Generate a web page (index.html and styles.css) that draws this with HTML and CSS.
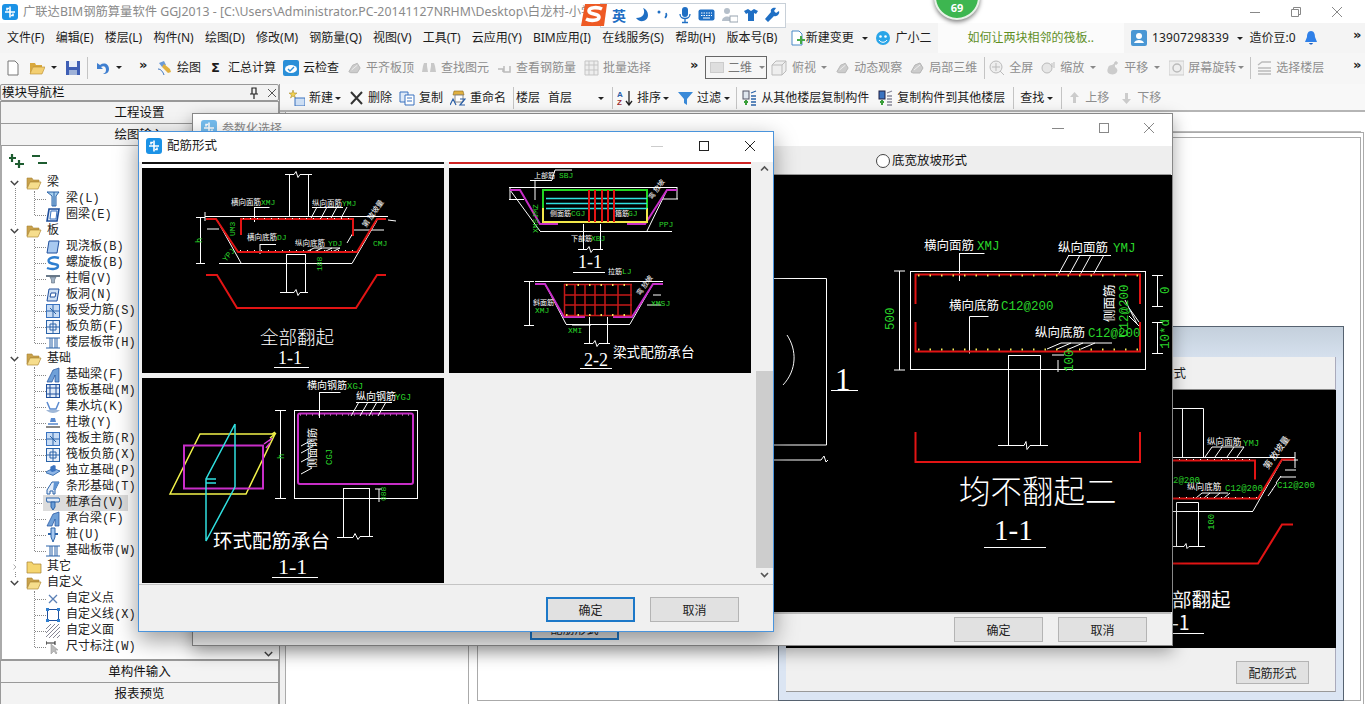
FILE: index.html
```html
<!DOCTYPE html>
<html lang="zh-CN">
<head>
<meta charset="utf-8">
<title>广联达BIM钢筋算量软件 GGJ2013</title>
<link rel="stylesheet" href="styles.css">
</head>
<body>
<svg class="defs" width="0" height="0">
  <symbol id="app" viewBox="0 0 16 16"><rect width="16" height="16" rx="3" fill="#1b92e6"/><path d="M8 2.500v11M3 8h10M5 6.500v-2h2M11 9.500v2H9" fill="none" stroke="#fff" stroke-width="1.600"/></symbol>
  <symbol id="fo" viewBox="0 0 16 14"><path d="M1 2h5l1 2h6v2H4L1 12z" fill="#c9a24b" stroke="#a88332" stroke-width=".6"/><path d="M4 6h11l-3 7H1z" fill="#f6dd8c" stroke="#b08a38" stroke-width=".7"/></symbol>
  <symbol id="fc" viewBox="0 0 16 14"><path d="M1 2h5l1 2h8v9H1z" fill="#f5d56f" stroke="#a88332" stroke-width=".7"/></symbol>
  <symbol id="down" viewBox="0 0 9 6"><path d="M.8 1 4.500 4.700 8.200 1" fill="none" stroke="#444" stroke-width="1.500"/></symbol>
  <symbol id="right" viewBox="0 0 9 9"><path d="M3 .8 6.700 4.500 3 8.200" fill="none" stroke="#aaa" stroke-width="1.500"/></symbol>
  <symbol id="i-beam" viewBox="0 0 14 16"><path d="M1 1h12l-3 4v10H6V5z" fill="#a9d0ee" stroke="#2a63a8"/><path d="M8 1v14" stroke="#2a63a8"/></symbol>
  <symbol id="i-ring" viewBox="0 0 14 16"><path d="M3 2h10l-2 12H1z" fill="#dfeaf8" stroke="#1f4f9c" stroke-width="1.600"/><path d="M5 4h6l-1 8H4z" fill="#fff" stroke="#3a73c0"/></symbol>
  <symbol id="i-slab" viewBox="0 0 14 16"><path d="M3 2h10l-2 12H1z" fill="#a8c9f0" stroke="#1f4f9c"/></symbol>
  <symbol id="i-spiral" viewBox="0 0 14 16"><path d="M13 3C6 1 1 4 3 7s9 1 9 4-6 4-11 2" fill="none" stroke="#2f7fd0" stroke-width="2.400"/></symbol>
  <symbol id="i-cap" viewBox="0 0 14 16"><path d="M0 4h14v2H0z" fill="#6a7a8a"/><path d="M4 6h6L8.500 9v3h-3V9z" fill="#9fb1c4" stroke="#5a6a7a" stroke-width=".6"/></symbol>
  <symbol id="i-hole" viewBox="0 0 14 16"><path d="M3 2h10l-2 12H1z" fill="#cfe0f5" stroke="#1f4f9c"/><path d="M5 6h5l-1 4H4z" fill="#fff" stroke="#1f4f9c"/></symbol>
  <symbol id="i-r1" viewBox="0 0 14 16"><rect x=".5" y="1.500" width="13" height="13" fill="#c7dcf5" stroke="#3a73c0"/><path d="M7 2v12M1 8h12M4 5l6 6" stroke="#2a63a8"/></symbol>
  <symbol id="i-r2" viewBox="0 0 14 16"><rect x=".5" y="1.500" width="13" height="13" fill="#e8f0fb" stroke="#2a63a8"/><path d="M7 2v12M1 8h12M4 5h6v6H4z" fill="none" stroke="#2a63a8"/></symbol>
  <symbol id="i-band" viewBox="0 0 14 16"><path d="M0 3h14M0 13h14M4 3v10M6 3v10M9 3v10M11 3v10" stroke="#2a63a8"/></symbol>
  <symbol id="i-fb" viewBox="0 0 14 16"><path d="M1 15 7 3l6-2v14H9V8l-3 7z" fill="#6fa0d8" stroke="#1f4f9c" stroke-width=".7"/></symbol>
  <symbol id="i-raft" viewBox="0 0 14 16"><rect x=".5" y="1.500" width="13" height="13" fill="#dfeaf8" stroke="#1f4f9c"/><path d="M4 2v12M10 2v12M1 5h12M1 11h12" stroke="#1f4f9c"/></symbol>
  <symbol id="i-pit" viewBox="0 0 14 16"><path d="M1 3l3 7h6l3-7" fill="none" stroke="#5a8ad0" stroke-width="1.500"/><path d="M0 11c4 4 10 4 14 0" fill="#a0b8d8"/></symbol>
  <symbol id="i-pier" viewBox="0 0 14 16"><path d="M5 3h4l1 4H4z" fill="#5a8ad0"/><path d="M2 8h10v2H2z" fill="#7fa4d8"/><path d="M0 11h14v2H0z" fill="#888"/></symbol>
  <symbol id="i-iso" viewBox="0 0 16 16"><path d="M0 9l8-4 8 3-8 5-8-3z" fill="#8fb6e6" stroke="#2a63a8"/><path d="M5 3l4-2 2 1v6L7 9 5 8z" fill="#3a73c0"/></symbol>
  <symbol id="i-str" viewBox="0 0 14 16"><path d="M1 15V11l5-8h7l-4 8v4H7v-3H4v3z" fill="#e2ecf9" stroke="#2a63a8"/><path d="M8 3h5l-4 8H7z" fill="#5f93d2"/></symbol>
  <symbol id="i-pc" viewBox="0 0 14 16"><path d="M0 3h13l1 2-1 2H1z" fill="#dfeaf8" stroke="#2a63a8"/><path d="M5 7h4v5l-2 3-2-3z" fill="#6fa0d8" stroke="#2a63a8"/></symbol>
  <symbol id="i-pile" viewBox="0 0 14 16"><path d="M2 7h10" stroke="#2a63a8" stroke-width="2"/><path d="M5 1h4v9l-2 5-2-5z" fill="#a8c9f0" stroke="#2a63a8"/></symbol>
  <symbol id="i-x" viewBox="0 0 14 16"><path d="M3 4l8 8M11 4l-8 8" stroke="#5a7fb5" stroke-width="1.300"/></symbol>
  <symbol id="i-ln" viewBox="0 0 14 16"><rect x="1.500" y="2.500" width="11" height="11" fill="none" stroke="#1f4f9c"/><path d="M0 1h3v3H0zM11 1h3v3h-3zM0 12h3v3H0zM11 12h3v3h-3z" fill="#2f7fd0"/></symbol>
  <symbol id="i-hat" viewBox="0 0 14 16"><path d="M0 6l5-5M0 10l9-9M0 14l13-13M3 15l11-11M7 15l7-7M11 15l3-3" stroke="#778" stroke-width=".9"/></symbol>
  <symbol id="i-dim" viewBox="0 0 14 16"><path d="M0 2v4M0 4h9M9 2v4" stroke="#222"/><path d="M5 5v10l3-3 2 3 1-1-2-3h3z" fill="#bbb" stroke="#999" stroke-width=".6"/></symbol>
  <symbol id="gr" viewBox="0 0 16 16"><path d="M2 12l4-7 5-2 3 5-3 5H4z" fill="#ccc" stroke="#b5b5b5"/><path d="M5 10l6-5" stroke="#eee"/></symbol>
</svg>

<header class="title">
  <svg class="ic16"><use href="#app"/></svg>
  <span class="title-t">广联达BIM钢筋算量软件 GGJ2013 - [C:\Users\Administrator.PC-20141127NRHM\Desktop\白龙村-小学教学楼结构工程施工图纸-2.GGJ12]</span>
  <div class="win">
    <svg width="12" height="12"><path d="M1 6.500h10" stroke="#888"/></svg>
    <svg width="12" height="12"><path d="M1.500 3.500h7v7h-7zM3.500 3V1.500h7v7H9" fill="none" stroke="#888"/></svg>
    <svg width="12" height="12"><path d="M1 1l10 10M11 1 1 11" stroke="#888"/></svg>
  </div>
</header>

<nav class="menu">
  <span>文件(F)</span><span>编辑(E)</span><span>楼层(L)</span><span>构件(N)</span><span>绘图(D)</span><span>修改(M)</span><span>钢筋量(Q)</span><span>视图(V)</span><span>工具(T)</span><span>云应用(Y)</span><span>BIM应用(I)</span><span>在线服务(S)</span><span>帮助(H)</span><span>版本号(B)</span>
  <svg class="ic16 m-ic" viewBox="0 0 16 16"><path d="M3 1h7l3 3v11H3z" fill="#fff" stroke="#4a8ac8"/><path d="M8 9h3V6h2v3h3v2h-3v3h-2v-3H8z" fill="#45a845"/></svg>
  <span class="nm">新建变更</span><i class="caret c1"></i>
  <svg class="ic16 m-ic2" viewBox="0 0 16 16"><circle cx="8" cy="8" r="7" fill="#2aa5e8"/><circle cx="5.500" cy="6.500" r="1.300" fill="#fff"/><circle cx="10.500" cy="6.500" r="1.300" fill="#fff"/><path d="M4 10c2 3 6 3 8 0" stroke="#fff" fill="none"/></svg>
  <span class="nm">广小二</span>
  <span class="tip">如何让两块相邻的筏板..</span>
  <svg class="ic16 m-user" viewBox="0 0 16 16"><rect width="16" height="16" rx="2" fill="#4a97d4"/><circle cx="8" cy="6" r="3" fill="#fff"/><path d="M3 13c1-4 9-4 10 0z" fill="#fff"/></svg>
  <span class="nm phone">13907298339</span><i class="caret c2"></i>
  <span class="bean">造价豆:0</span>
  <svg class="ic16 bell" viewBox="0 0 16 16"><path d="M8 1c-3 0-4 3-4 6l-2 5h12l-2-5c0-3-1-6-4-6z" fill="#2f80e8"/><path d="M6 13c1 2 3 2 4 0z" fill="#1f60c0"/></svg>
  <b class="more">»</b>
</nav>

<div class="tb1">
  <svg class="w12" viewBox="0 0 12 16"><path d="M1 1h7l3 3v11H1z" fill="#fff" stroke="#777"/></svg>
  <svg class="w16 m10" viewBox="0 0 16 16"><path d="M1 3h5l1 2h6v2H4l-3 7z" fill="#d9a93e"/><path d="M4 7h12l-3 7H1z" fill="#f3cf72" stroke="#b88a2a" stroke-width=".6"/></svg>
  <i class="caret m6"></i>
  <svg class="w14 m9" viewBox="0 0 14 16"><rect y="1" width="14" height="14" fill="#3f5fb5"/><rect x="3" y="1" width="8" height="6" fill="#e8eef8"/><rect x="3" y="10" width="8" height="5" fill="#9fb2d8"/></svg>
  <i class="sep m7"></i>
  <svg class="w14 m7" viewBox="0 0 14 16"><path d="M2 3v6h6L6 7c3-2 5 0 5 3 0 2-1 3-3 4 4 0 6-2 6-5 0-5-5-7-9-4z" fill="#3f7fd0"/></svg>
  <i class="caret m7"></i>
  <b class="more m17">»</b>
  <div class="t m10"><svg class="w16" viewBox="0 0 16 16"><path d="M2 3l5-2 2 4-4 2z" fill="#6a9ad8"/><path d="M5 7l6 6 3-1-1-3-6-5z" fill="#e0b040"/><path d="M1 9c3 0 5 3 6 6" stroke="#3a73c0" fill="none"/></svg><span>绘图</span></div>
  <div class="t m10"><b class="sig">Σ</b><span class="sigt">汇总计算</span></div>
  <div class="t m7"><svg class="w16" viewBox="0 0 16 16"><rect width="16" height="16" rx="2" fill="#2a8fd8"/><ellipse cx="8" cy="9" rx="6" ry="4" fill="#fff"/><path d="M5 9l2 2 4-4" stroke="#2a8fd8" fill="none" stroke-width="1.400"/></svg><span>云检查</span></div>
  <div class="t dim m8"><svg class="w15"><use href="#gr"/></svg><span>平齐板顶</span></div>
  <div class="t dim m7"><svg class="w16" viewBox="0 0 16 16"><path d="M3 3h3v3l1 6H1l1-6zM10 3h3l1 3 1 6H9l1-6z" fill="#c8c8c8"/></svg><span>查找图元</span></div>
  <div class="t dim m8"><svg class="w15" viewBox="0 0 15 16"><path d="M1 9h5v3M7 6v6h6V6" fill="none" stroke="#bbb" stroke-width="1.500"/></svg><span>查看钢筋量</span></div>
  <div class="t dim m8"><svg class="w15" viewBox="0 0 15 16"><path d="M1 1h13v14H1zM1 5h13M1 10h13M5 1v14M10 1v14" fill="#eee" stroke="#c5c5c5"/></svg><span>批量选择</span></div>
  <b class="more m39">»</b>
  <div class="combo m7"><i class="swatch"></i><span>二维</span><i class="caret cg"></i></div>
  <div class="t dim m4"><svg class="w17" viewBox="0 0 17 16"><path d="M1 5l4-4h10v10l-4 4H1zM1 5h10v10M11 5l4-4" fill="#eee" stroke="#bbb"/></svg><span>俯视</span></div><i class="caret cg m5"></i>
  <div class="t dim m8"><svg class="w15"><use href="#gr"/></svg><span>动态观察</span></div>
  <div class="t dim m7"><svg class="w16"><use href="#gr"/></svg><span>局部三维</span></div>
  <i class="sep m7"></i>
  <div class="t dim m4"><svg class="w16" viewBox="0 0 16 16"><circle cx="7" cy="7" r="6" fill="#eee" stroke="#bbb"/><path d="M7 3v8M3 7h8M11 11l4 4" stroke="#bbb"/></svg><span>全屏</span></div>
  <div class="t dim m8"><svg class="w15" viewBox="0 0 15 16"><circle cx="6" cy="8" r="5" fill="#e6e6e6" stroke="#bbb"/><path d="M11 3v4M13 2v6" stroke="#bbb"/></svg><span>缩放</span></div><i class="caret cg m6"></i>
  <div class="t dim m9"><svg class="w15" viewBox="0 0 15 16"><path d="M3 8c0-2 2-3 4-3l3-2v4c2 1 3 3 2 5s-4 3-7 2-3-4-2-6z" fill="#ccc"/><path d="M11 1v4M9 3h4" stroke="#bbb"/></svg><span>平移</span></div><i class="caret cg m6"></i>
  <div class="t dim m9"><svg class="w15" viewBox="0 0 15 16"><rect y="1" width="15" height="14" fill="#eee" stroke="#ccc"/><circle cx="8" cy="8" r="4" fill="none" stroke="#bbb" stroke-width="1.500"/></svg><span>屏幕旋转</span></div><i class="caret cg m2"></i>
  <i class="sep m6"></i>
  <div class="t dim m6"><svg class="w15" viewBox="0 0 15 16"><path d="M1 5l4-3h9M1 8h13M1 11h13M1 14h13" fill="none" stroke="#bbb" stroke-width="1.400"/></svg><span>选择楼层</span></div>
  <b class="more end">»</b>
</div>

<div class="work">
  <aside class="nav">
    <div class="nav-h"><span>模块导航栏</span>
      <svg class="pin" width="10" height="12"><path d="M3 1h4v6H3zM1 7h8M5 7v5" fill="none" stroke="#222" stroke-width="1.200"/></svg>
      <svg class="navx" width="10" height="10"><path d="M1 1l8 8M9 1 1 9" stroke="#555"/></svg>
    </div>
    <div class="nav-b">工程设置</div>
    <div class="nav-b">绘图输入</div>
    <div class="tools">
      <svg width="16" height="16"><path d="M3 1v8M0 5h7M10 7v8M6 11h9" stroke="#1d5c30" stroke-width="2.200"/></svg>
      <svg width="16" height="16"><path d="M0 3h8M6 10h9" stroke="#1d5c30" stroke-width="2.200"/></svg>
    </div>
    <div class="tree">
      <div class="rt"><svg class="chev"><use href="#down"/></svg><svg class="fd"><use href="#fo"/></svg><span>梁</span></div>
      <div class="kids">
        <div class="ch"><i></i><svg><use href="#i-beam"/></svg><span>梁(L)</span></div>
        <div class="ch"><i></i><svg><use href="#i-ring"/></svg><span>圈梁(E)</span></div>
      </div>
      <div class="rt"><svg class="chev"><use href="#down"/></svg><svg class="fd"><use href="#fo"/></svg><span>板</span></div>
      <div class="kids">
        <div class="ch"><i></i><svg><use href="#i-slab"/></svg><span>现浇板(B)</span></div>
        <div class="ch"><i></i><svg><use href="#i-spiral"/></svg><span>螺旋板(B)</span></div>
        <div class="ch"><i></i><svg><use href="#i-cap"/></svg><span>柱帽(V)</span></div>
        <div class="ch"><i></i><svg><use href="#i-hole"/></svg><span>板洞(N)</span></div>
        <div class="ch"><i></i><svg><use href="#i-r1"/></svg><span>板受力筋(S)</span></div>
        <div class="ch"><i></i><svg><use href="#i-r2"/></svg><span>板负筋(F)</span></div>
        <div class="ch"><i></i><svg><use href="#i-band"/></svg><span>楼层板带(H)</span></div>
      </div>
      <div class="rt"><svg class="chev"><use href="#down"/></svg><svg class="fd"><use href="#fo"/></svg><span>基础</span></div>
      <div class="kids">
        <div class="ch"><i></i><svg><use href="#i-fb"/></svg><span>基础梁(F)</span></div>
        <div class="ch"><i></i><svg><use href="#i-raft"/></svg><span>筏板基础(M)</span></div>
        <div class="ch"><i></i><svg><use href="#i-pit"/></svg><span>集水坑(K)</span></div>
        <div class="ch"><i></i><svg><use href="#i-pier"/></svg><span>柱墩(Y)</span></div>
        <div class="ch"><i></i><svg><use href="#i-r1"/></svg><span>筏板主筋(R)</span></div>
        <div class="ch"><i></i><svg><use href="#i-r2"/></svg><span>筏板负筋(X)</span></div>
        <div class="ch"><i></i><svg><use href="#i-iso"/></svg><span>独立基础(P)</span></div>
        <div class="ch"><i></i><svg><use href="#i-str"/></svg><span>条形基础(T)</span></div>
        <div class="ch on"><i></i><svg><use href="#i-pc"/></svg><span>桩承台(V)</span></div>
        <div class="ch"><i></i><svg><use href="#i-fb"/></svg><span>承台梁(F)</span></div>
        <div class="ch"><i></i><svg><use href="#i-pile"/></svg><span>桩(U)</span></div>
        <div class="ch"><i></i><svg><use href="#i-band"/></svg><span>基础板带(W)</span></div>
      </div>
      <div class="rt"><svg class="chev"><use href="#right"/></svg><svg class="fd"><use href="#fc"/></svg><span>其它</span></div>
      <div class="rt"><svg class="chev"><use href="#down"/></svg><svg class="fd"><use href="#fo"/></svg><span>自定义</span></div>
      <div class="kids">
        <div class="ch"><i></i><svg><use href="#i-x"/></svg><span>自定义点</span></div>
        <div class="ch"><i></i><svg><use href="#i-ln"/></svg><span>自定义线(X)</span><em class="edit"></em></div>
        <div class="ch"><i></i><svg><use href="#i-hat"/></svg><span>自定义面</span></div>
        <div class="ch"><i></i><svg><use href="#i-dim"/></svg><span>尺寸标注(W)</span></div>
      </div>
      <svg class="tree-down" width="9" height="6"><use href="#down"/></svg>
    </div>
    <div class="nav-b">单构件输入</div>
    <div class="nav-b">报表预览</div>
  </aside>
  <main class="pane">
    <div class="tb2">
      <div class="t"><svg class="w16" viewBox="0 0 16 16"><path d="M4 0l1 3h3L5.500 5l1 3L4 6 1.500 8l1-3L0 3h3z" fill="#f0d050" stroke="#a08020" stroke-width=".5"/><rect x="6" y="8" width="10" height="8" fill="#cfe0f5" stroke="#3a73c0"/></svg><span>新建</span></div><i class="caret m2"></i>
      <div class="t m8"><svg class="w15" viewBox="0 0 15 16"><path d="M2 2l11 12M13 2 2 14" stroke="#333" stroke-width="2"/></svg><span>删除</span></div>
      <div class="t m7"><svg class="w16" viewBox="0 0 16 16"><path d="M1 2h8v10H1z" fill="#dfeaf8" stroke="#3a73c0"/><path d="M6 5h9v10H6z" fill="#fff" stroke="#3a73c0"/><path d="M8 8h5M8 11h5" stroke="#3a73c0"/></svg><span>复制</span></div>
      <div class="t m7"><svg class="w16" viewBox="0 0 16 16"><path d="M4 1h9l1 4H3z" fill="#e0b040" stroke="#8a6a20" stroke-width=".6"/><path d="M5 5h8v7H5z" fill="#fff" stroke="#888"/><path d="M0 15l3-6 3 6M10 9h5l-5 6h5" fill="none" stroke="#2a5fa8" stroke-width="1.200"/></svg><span>重命名</span></div>
      <i class="sep m7"></i><span class="m2">楼层</span><span class="m8">首层</span><i class="caret m26"></i>
      <i class="sep m8"></i>
      <div class="t m4"><svg class="w16" viewBox="0 0 16 16"><path d="M12 1v13M9 11l3 4 3-4" fill="none" stroke="#222" stroke-width="1.300"/><text x="0" y="7" class="az1">A</text><text x="0" y="15" class="az2">Z</text></svg><span>排序</span></div><i class="caret m2"></i>
      <div class="t m9"><svg class="w15" viewBox="0 0 15 16"><path d="M0 2h15L9 9v6L6 13V9z" fill="#3a8ad8"/></svg><span>过滤</span></div><i class="caret m3"></i>
      <i class="sep m6"></i>
      <div class="t m5"><svg class="w15" viewBox="0 0 15 16"><rect x="1" y="1" width="6" height="8" fill="#dfe6ee" stroke="#556"/><path d="M2 12h4M4 10v5" stroke="#3aa03a" stroke-width="2"/><path d="M9 3l5-2M9 6h5M9 9h5M9 12h5M9 15h5" stroke="#2a63a8" stroke-width="1.300"/></svg><span>从其他楼层复制构件</span></div>
      <div class="t m9"><svg class="w15" viewBox="0 0 15 16"><rect x="1" y="1" width="6" height="8" fill="#3a73c0" stroke="#224"/><path d="M2 12h4M4 10v5" stroke="#3aa03a" stroke-width="2"/><path d="M9 3l5-2M9 6h5M9 9h5M9 12h5M9 15h5" stroke="#889" stroke-width="1.300"/></svg><span>复制构件到其他楼层</span></div>
      <i class="sep m8"></i><span class="m6">查找</span><i class="caret m3"></i><i class="sep m8"></i>
      <div class="t dim m6"><svg class="w13" viewBox="0 0 13 16"><path d="M6.500 2 11 7H8v6H5V7H2z" fill="#ccc"/></svg><span>上移</span></div>
      <div class="t dim m11"><svg class="w13" viewBox="0 0 13 16"><path d="M6.500 14 2 9h3V3h3v6h3z" fill="#ccc"/></svg><span>下移</span></div>
    </div>
    <div class="canvas-o"><div class="canvas-i"></div></div>
  </main>
</div>

<!-- window 3 : behind -->
<section class="d3">
  <div class="d3-in">
    <div class="d3-h">底宽放坡形式</div>
    <svg class="cad" width="550" height="258" viewBox="786 390 550 258">
      <path class="w" d="M1161.500 408.500h42M1182.500 408.500v49M1203.500 408.500v49M1172 457.500h123M1295 452v16M1283 460h15M1282 460l-29 51M1172 511.500h81M1176.500 502.500v44M1198.500 502.500h-22M1198.500 502.500v44M1170 546.500h14l2-3 1 5 2-2h16"/>
      <path class="w" d="M1205 457l7-10h32M1215 457l7-10M1227 457l7-10M1237 457l7-10M1196 498l6-5h26M1204 498l6-5M1214 498l6-5M1224 498l6-5M1276 483l5-7M1272 490l5-7M1268 496l5-7M1285 470h11M1280 477h16"/>
      <path class="r" d="M1172 460.500h83v19M1172 498.500h86l24-39h12"/>
      <path class="d" d="M1172 459.500h83M1172 497.500h86"/>
      <path class="r" d="M1172 563.500h86l24-39h11"/>
      <text class="tw s85" x="1207" y="445">纵向面筋</text><text class="tg s9" x="1243" y="446">YMJ</text>
      <text class="tw s85" x="1187" y="490">纵向底筋</text><text class="tg s9" x="1225" y="491">C12@200</text>
      <text class="tg s9" x="1277" y="488">C12@200</text><text class="tg s9" x="1173" y="483">2@200</text>
      <text class="tg s9" transform="rotate(-90 1214 512)" x="1196" y="512">100</text>
      <text class="tw s9" transform="rotate(-55 1268 470)" x="1268" y="470">第 放坡量</text>
      <text class="tw s20" x="1172" y="607">部翻起</text>
      <text class="tw s20" x="1172" y="630">-1</text>
      <path class="w" d="M1172 633.500h32"/>
    </svg>
    <div class="d3-f"><button class="btn b3">配筋形式</button></div>
  </div>
</section>

<!-- window 2 -->
<section class="d2">
  <div class="d2-t"><svg class="ic16 faded"><use href="#app"/></svg><span>参数化选择</span>
    <div class="d2-w">
      <svg width="14" height="12"><path d="M1 6.500h12" stroke="#888"/></svg>
      <svg width="12" height="12"><rect x="1.500" y="1.500" width="9" height="9" fill="none" stroke="#888"/></svg>
      <svg width="12" height="12"><path d="M1 1l10 10M11 1 1 11" stroke="#888"/></svg>
    </div>
  </div>
  <div class="d2-r"><i class="radio"></i><span>底宽放坡形式</span></div>
  <svg class="cad" width="978" height="437" viewBox="193 175 978 437">
    <path class="w" d="M770 278.500h55.500v166.500H770M786 335c10 15 10 35 -4 50M830 390.500h27M770 460h50l3-4 2 6 2-2"/>
    <text class="tw s32" x="834" y="390">1</text>
    <rect class="w" x="909.500" y="271.500" width="235" height="98"/>
    <path class="w" d="M898.500 271v99M893 271h11M893 370h11M958.500 253v28M958.500 253.500h25M968.500 316.500v37M968.500 316.500h19M1007.500 355v90M1039.500 355v90M1007.500 355.500h32M997 445.500h26l2-4 1 8 3-4h18M1156.500 275v32M1151 275.500h11M1151 306.500h11M1156.500 322v32M1151 322.500h11M1151 353.500h11M1057 360v12M1051 355h12"/>
    <path class="w" d="M1067 255.500h43M1057 275l11-20M1068 275l11-20M1079 275l11-20M1092 275l11-20M1046 349l14-6h51M1056 349l14-6M1068 349l14-6M1080 349l14-6M1128 308l10 14M1128 316l10 10M1124 300l12 24"/>
    <path class="r" d="M914.500 304v-29.500h224.500v29.500M914.500 322v29.500h224.500V322"/>
    <path class="r" d="M914.500 432v30h224.500v-30"/>
    <path class="dots" d="M917 275.500h220M917 349.500h220"/>
    <text class="tw s12" x="923" y="250">横向面筋</text><text class="tg s12m" x="976" y="250">XMJ</text>
    <text class="tw s12" x="1057" y="252">纵向面筋</text><text class="tg s12m" x="1112" y="252">YMJ</text>
    <text class="tw s12" x="948" y="310">横向底筋</text><text class="tg s12m" x="1000" y="310">C12@200</text>
    <text class="tw s12" x="1034" y="337">纵向底筋</text><text class="tg s12m" x="1087" y="337">C12@200</text>
    <text class="tw s12" transform="rotate(-90 1113 322)" x="1113" y="322">侧面筋</text>
    <text class="tg s12m" transform="rotate(-90 1127 337)" x="1127" y="337">C12@200</text>
    <text class="tg s12m" transform="rotate(-90 893 330)" x="893" y="330">500</text>
    <text class="tg s12m" transform="rotate(-90 1168 294)" x="1168" y="294">0</text>
    <text class="tg s12m" transform="rotate(-90 1168 349)" x="1168" y="349">10*d</text>
    <text class="tg s12m" transform="rotate(-90 1072 372)" x="1072" y="372">100</text>
    <text class="tw s31" x="958" y="503">均不翻起二</text>
    <text class="tw s28" x="993" y="540">1-1</text>
    <path class="w" d="M983 547.500h62"/>
  </svg>
  <div class="d2-f">
    <button class="btn on b-pat">配筋形式</button>
    <button class="btn">确定</button>
    <button class="btn">取消</button>
  </div>
</section>

<!-- window 1 : front -->
<section class="d1">
  <div class="d1-t"><svg class="ic16"><use href="#app"/></svg><span>配筋形式</span>
    <div class="d1-w">
      <svg width="14" height="12"><path d="M1 6.500h12" stroke="#ccc"/></svg>
      <svg width="12" height="12"><rect x="1.500" y="1.500" width="9" height="9" fill="none" stroke="#222"/></svg>
      <svg width="12" height="12"><path d="M1 1l10 10M11 1 1 11" stroke="#222"/></svg>
    </div>
  </div>
  <div class="d1-b">
    <div class="grid">
      <div class="cell">
        <svg class="cad" width="302" height="205" viewBox="142 168 302 205">
          <path class="w" d="M205 216.500h183M289.500 174v42M308.500 174v42M285 174.500h9l2-3 2 6 2-3h12M205 212v9M396 221l-8-1M219 263.500h133l25-43M217 220l24 43M200.500 217v46M196 217.500h9M196 263.500h9M286.500 254v38M305.500 254v38M286.500 254.500h19M280 292.500h14l2-3 2 6 2-3h8"/>
          <path class="w" d="M254.500 207v15M254.500 207.500h15M312 207.500h31M310 220l7-13M320 220l7-13M330 220l7-13M340 220l7-13M260 244v10M260 244.500h16M306 252l8-4h26M314 252l8-4M324 252l8-4M332 252l8-4M207 229h12M352 230h32M347 243l6-10"/>
          <path class="r" d="M206 219h10l22 33h119l20-33h9M241 235v-16h112v17M206 275h11l20 33h119l21-33h9"/>
          <path class="dots dk" d="M243 218.500h108M240 250.500h116"/>
          <text class="tw s75" x="231" y="205">横向面筋</text><text class="tg s8" x="261" y="205">XMJ</text>
          <text class="tw s75" x="312" y="206">纵向面筋</text><text class="tg s8" x="342" y="206">YMJ</text>
          <text class="tw s75" x="247" y="240">横向底筋</text><text class="tg s8" x="277" y="240">DJ</text>
          <text class="tw s75" x="295" y="246">纵向底筋</text><text class="tg s8" x="328" y="246">YDJ</text>
          <text class="tg s8" x="373" y="246">CMJ</text>
          <text class="tg s8" transform="rotate(-90 235 236)" x="235" y="236">UM3</text>
          <text class="tg s9" transform="rotate(-90 202 243)" x="202" y="243">h</text>
          <text class="tg s8" transform="rotate(-50 226 262)" x="226" y="262">YPJ</text>
          <text class="tg s8" transform="rotate(-90 321 265)" x="315" y="266">188</text>
          <text class="tw s75" transform="rotate(-55 366 228)" x="366" y="228">第 放坡量</text>
          <text class="tw s19" x="260" y="344">全部翻起</text>
          <text class="tw s18" x="278" y="364">1-1</text>
          <path class="w" d="M274 367.500h35"/>
        </svg>
      </div>
      <div class="cell sel">
        <svg class="cad" width="302" height="205" viewBox="449 168 302 205">
          <path class="w" d="M509 187.500h168M540 231.500h132M583.500 224v25M600.500 224v25M578 249.500h9l2-3 2 6 2-3h10M510 190l30 41M647 231l20-41M677 187v12M510 187v12M509 199.500h15M663 199h15M530 180.500h22M555 170h17M555 170l-3 10M535 180l0 20"/>
          <path class="w" d="M535 281.500h128M529.500 281v44M524 281.500h10M524 325.500h10M566 324.500h64M545 284l21 40M630 324l23-40M589.500 317v26M607.500 317v26M584 343.500h9l2-3 2 6 2-3h11M653 295h8M647 305h14M572 325h19"/>
          <path class="m" d="M510 190h10l20 34h18M627 224h18l22-34h10M535 284h10l19 33h21M613 317h19l21-33h10"/>
          <path class="g2" d="M543 208v-18h104v18"/>
          <path class="y2" d="M543 208v14h104v-14"/>
          <path class="c" d="M546 198.500h101M546 203.500h101M546 208.500h101"/>
          <path class="r" d="M589 190v32M595 190v32M602 190v32M608 190v32M614 190v32"/>
          <path class="r1" d="M564.500 284v31M575 284v31M585 284v31M595 284v31M605 284v31M618 284v31M631 284v31M564 284.500h68M564 295h68M564 305h68M564 315.500h68"/>
          <path class="dots" d="M566 285h66M566 315h66"/>
          <text class="tw s7" x="534" y="178">上部筋</text><text class="tg s8" x="559" y="178">SBJ</text>
          <text class="tw s7" x="550" y="216">侧面筋</text><text class="tg s8" x="571" y="216">CGJ</text>
          <text class="tw s7" x="615" y="216">箍筋</text><text class="tg s8" x="628" y="216">GJ</text>
          <text class="tw s7" x="571" y="241">下部筋</text><text class="tg s8" x="591" y="241">XBJ</text>
          <text class="tw s7" x="608" y="274">拉筋</text><text class="tg s8" x="622" y="274">LJ</text>
          <text class="tw s7" x="533" y="305">斜面筋</text><text class="tg s8" x="535" y="313">XMJ</text>
          <text class="tg s8" x="651" y="306">XMSJ</text><text class="tg s8" x="659" y="227">PPJ</text><text class="tg s8" x="568" y="333">XMI</text>
          <text class="tg s8" transform="rotate(-90 538 215)" x="520" y="215">XMSJMZ</text>
          <text class="tw s7" transform="rotate(-55 652 200)" x="652" y="200">弯 放坡</text>
          <text class="tw s7" transform="rotate(-55 640 296)" x="640" y="296">弯 放坡</text>
          <text class="tw s18" x="578" y="268">1-1</text><path class="w" d="M573 272.500h32"/>
          <text class="tw s18" x="584" y="366">2-2</text><path class="w" d="M580 368.500h32"/>
          <text class="tw s14" x="613" y="357">梁式配筋承台</text>
        </svg>
      </div>
      <div class="cell low">
        <svg class="cad" width="302" height="205" viewBox="142 378 302 205">
          <path class="y" d="M200 434h75l-29 60h-76z"/>
          <path class="m" d="M184 445.500h79v43h-79z"/>
          <path class="c" d="M235 424v63M235 424l-29 55v62l29-54M206 479h10M206 483h10"/>
          <path class="mt" d="M264 444l7-5M269 441l3-3M266 448l4-5"/>
          <path class="yt" d="M270 438l6-5M272 434l3-2"/>
          <rect class="w" x="294.500" y="410.500" width="123" height="88"/>
          <rect class="m" x="298" y="413.500" width="115" height="70.500" rx="2"/>
          <path class="w" d="M280.500 410v88M275 410.500h11M275 498.500h11M319.500 392v26M319.500 392.500h21M356 402.500h36M351 416l8-14M360 416l8-14M369 416l8-14M378 416l8-14M301 446l11-6M301 453l11-6M301 462l11-6M301 474l11-6M343.500 488v49M369.500 488v49M343.500 488.500h26M337 537.500h16l2-4 3 6 2-3h13M379 489v13M375 489h7"/>
          <path class="dots mg" d="M300 415h110"/>
          <text class="tw s10" x="307" y="389">横向钢筋</text><text class="tg s9" x="347" y="389">XGJ</text>
          <text class="tw s10" x="356" y="400">纵向钢筋</text><text class="tg s9" x="395" y="400">YGJ</text>
          <text class="tw s10" transform="rotate(-90 316 468)" x="316" y="468">侧面钢筋</text>
          <text class="tg s9" transform="rotate(-90 332 465)" x="332" y="465">CGJ</text>
          <text class="tg s9" transform="rotate(-90 284 459)" x="284" y="459">h</text>
          <text class="tg s8" transform="rotate(-90 386 501)" x="386" y="501">088</text>
          <text class="tw s20" x="213" y="548">环式配筋承台</text>
          <text class="tw s22" x="278" y="574">1-1</text>
          <path class="w" d="M272 577.500h46"/>
        </svg>
      </div>
    </div>
    <div class="scroll">
      <svg width="17" height="14" class="su"><path d="M5 8.500 8.500 5 12 8.500" fill="none" stroke="#555" stroke-width="1.600"/></svg>
      <i class="thumb"></i>
      <svg width="17" height="14"><path d="M5 5l3.500 3.500L12 5" fill="none" stroke="#555" stroke-width="1.600"/></svg>
    </div>
  </div>
  <div class="d1-f">
    <button class="btn on">确定</button>
    <button class="btn">取消</button>
  </div>
</section>

<!-- IME bar -->
<div class="ime">
  <svg class="ime-s" width="28" height="24" viewBox="0 0 28 24"><path d="M5 1h22l-3 22H1z" fill="#ee5a24"/><path d="M22 6c-4-2-13-2-13 2s10 2 10 6-9 4-13 2" fill="none" stroke="#fff" stroke-width="3.600"/></svg>
  <b class="ime-y">英</b>
  <svg class="ime-moon" width="14" height="16" viewBox="0 0 14 16"><path d="M8 1c3 5 0 10-7 10 3 5 12 4 12-3 0-3-2-6-5-7z" fill="#1f6fc4"/></svg>
  <svg class="ime-pt" width="12" height="16" viewBox="0 0 12 16"><circle cx="2" cy="5" r="1.500" fill="#1f6fc4"/><path d="M9 6c1 2 0 4-1 5" stroke="#1f6fc4" stroke-width="1.600" fill="none"/></svg>
  <svg width="14" height="18" viewBox="0 0 14 18"><rect x="4" y="1" width="6" height="10" rx="3" fill="#1f6fc4"/><path d="M2 8c0 6 10 6 10 0M7 13v3M4 16.500h6" stroke="#1f6fc4" fill="none" stroke-width="1.300"/></svg>
  <svg width="17" height="14" viewBox="0 0 17 14"><rect x=".5" y="1.500" width="16" height="11" rx="2" fill="#1f6fc4"/><path d="M3 5h11M3 7.500h11" stroke="#fff" stroke-dasharray="1.500 1"/><path d="M5 10h7" stroke="#fff"/></svg>
  <svg width="17" height="16" viewBox="0 0 17 16"><circle cx="6" cy="4" r="3" fill="#b5bfca"/><path d="M1 14c0-6 10-6 10 0z" fill="#b5bfca"/><rect x="9" y="9" width="8" height="6" fill="#fff" stroke="#98a4b0"/></svg>
  <svg width="14" height="14" viewBox="0 0 14 14"><path d="M4 1 0 3l2 3 2-1v8h6V5l2 1 2-3-4-2-3 2z" fill="#1f6fc4"/></svg>
  <svg width="16" height="16" viewBox="0 0 16 16"><path d="M15 4l-3 2-2-2 2-3c-3-1-6 1-5 4L1 12l3 3 6-6c3 1 6-2 5-5z" fill="#1f6fc4"/></svg>
</div>

<div class="ball"><span>69</span></div>
</body>
</html>
```

FILE: styles.css
```css
* { box-sizing: border-box; }
html, body { margin: 0; padding: 0; }
body {
  position: relative;
  width: 1365px;
  height: 704px;
  overflow: hidden;
  background: #fff;
  color: #1c1c1c;
  font: 12px/16px "Noto Sans", "Noto Sans CJK SC", sans-serif;
}
.defs { position: absolute; }
svg { display: block; flex: none; }
.ic16 { width: 16px; height: 16px; }
.w12 { width: 12px; height: 16px; }
.w13 { width: 13px; height: 16px; }
.w14 { width: 14px; height: 16px; }
.w15 { width: 15px; height: 16px; }
.w16 { width: 16px; height: 16px; }
.w17 { width: 17px; height: 16px; }

/* spacing helpers */
.m2 { margin-left: 2px; } .m3 { margin-left: 3px; } .m4 { margin-left: 4px; }
.m5 { margin-left: 5px; } .m6 { margin-left: 6px; } .m7 { margin-left: 7px; }
.m8 { margin-left: 8px; } .m9 { margin-left: 9px; } .m10 { margin-left: 10px; }
.m11 { margin-left: 11px; } .m17 { margin-left: 17px; } .m26 { margin-left: 26px; }
.m39 { margin-left: 39px; }

/* title */
.title { height: 23px; display: flex; align-items: center; padding-left: 2px; background: #fff; overflow: hidden; }
.title-t { margin-left: 5px; color: #8a8a8a; white-space: nowrap; font-size: 12.300px; }
.win { margin-left: auto; display: flex; gap: 29px; padding-right: 22px; }

/* menu */
.menu { height: 30px; display: flex; align-items: center; gap: 11.200px; padding-left: 7px; background: #f4f4f4; white-space: nowrap; }
.m-ic { margin-right: -10px; }
.m-ic2 { margin-left: -4px; margin-right: -7px; }
.tip { margin-left: -5px; color: #5f8f1f; background: #fbfbfb; padding: 7px 30px; }
.m-user { margin-left: -4px; margin-right: -6.500px; }
.phone { letter-spacing: .15px; }
.bean { margin-left: -5px; }
.bell { margin-left: -4px; }
.more { font: bold 13px/13px "DejaVu Sans", sans-serif; width: 8px; align-self: flex-start; margin-top: 5px; color: #222; }
.menu .more { margin-left: auto; margin-right: 4px; }
.end { margin-left: auto; margin-right: 4px; }
.caret { display: block; flex: none; width: 0; height: 0; border: 3px solid transparent; border-top: 3px solid #222; border-bottom: 0; }
.c1 { margin-left: -3px; }
.c2 { margin-left: -3px; }
.cg { border-top-color: #888; }

/* toolbars */
.tb1 { height: 31px; display: flex; align-items: center; padding: 0 0 2px 7px; background: #f6f6f6; white-space: nowrap; }
.tb2 { height: 28px; display: flex; align-items: center; padding: 2px 0 0 9px; background: #f8f8f8; border-bottom: 2px solid #b5b5b5; white-space: nowrap; }
.t { display: flex; align-items: center; gap: 4px; }
.dim { color: #8e8e8e; }
.sep { display: block; flex: none; width: 1px; height: 22px; background: #c4c4c4; }
.sig { font: bold 13px/16px "DejaVu Sans", sans-serif; width: 10px; }
.sigt { margin-left: 3px; }
.combo { width: 62px; height: 23px; border: 1px solid #666; display: flex; align-items: center; gap: 4px; padding-left: 4px; color: #777; background: #f6f6f6; }
.swatch { display: block; width: 14px; height: 11px; background: #dedede; border: 1px solid #ccc; }
.combo .caret { margin-left: 3px; }
.az1 { font: bold 8px "Liberation Sans", sans-serif; fill: #2a5fa8; }
.az2 { font: bold 8px "Liberation Sans", sans-serif; fill: #a03030; }

/* work area */
.work { height: 620px; display: flex; background: #f0f0f0; }
.nav { width: 280px; display: flex; flex-direction: column; border-right: 1px solid #999; background: #f0f0f0; }
.nav-h { height: 17px; flex: none; position: relative; display: flex; align-items: center; border: 1px solid #999; border-radius: 2px; background: #f2f2f2; padding-left: 1px; color: #111; font-size: 12.500px; }
.pin { position: absolute; left: 248px; top: 2px; }
.navx { position: absolute; left: 266px; top: 3px; }
.nav-b { height: 22px; flex: none; text-align: center; line-height: 22px; background: #f3f3f3; border: 1px solid #999; border-width: 1px 1px 0 1px; color: #111; font-size: 12.500px; }
.tools { height: 30px; flex: none; display: flex; gap: 7px; padding: 7px 0 0 7px; background: #fff; border-top: 1px solid #999; border-left: 2px solid #aaa; }
.tree { flex: 1; position: relative; background: #fff; border-left: 2px solid #aaa; font: 12px/16px "Liberation Mono", "Noto Sans CJK SC", monospace; color: #222; white-space: nowrap; border-bottom: 1px solid #999; }
.tree::before { content: ""; position: absolute; left: 13px; top: 8px; height: 400px; border-left: 1px dotted #888; }
.rt { height: 16px; display: flex; align-items: center; position: relative; padding-left: 8px; }
.chev { width: 9px; height: 6px; background: #fff; outline: 2px solid #fff; }
.fd { width: 16px; height: 14px; margin-left: 7px; margin-right: 5px; }
.kids { position: relative; margin-left: 32px; border-left: 1px dotted #888; }
.kids::after { content: ""; position: absolute; left: -1px; bottom: 0; height: 7px; width: 1px; background: #fff; }
.ch { height: 16px; display: flex; align-items: center; position: relative; }
.ch i { display: block; flex: none; width: 11px; border-top: 1px dotted #888; }
.ch svg { width: 14px; height: 16px; }
.ch span { margin-left: 6px; }
.ch.on svg { background: #dcdcdc; box-shadow: -3px 0 0 #dcdcdc; }
.ch.on span { background: #dcdcdc; padding: 0 4px 0 6px; margin-left: 0; }
.edit { display: block; width: 6px; height: 16px; margin-left: 9px; background: #cfdff0; border: 1px solid #3a73c0; }
.tree-down { position: absolute; left: 262px; bottom: 2px; }

.pane { flex: 1; display: flex; flex-direction: column; margin-left: 0; }
.canvas-o { flex: 1; background: #fff; margin-left: 5px; padding: 20px 1px 0 182px; border-left: 1px solid #aaa; }
.canvas-i { height: 100%; border: 1px solid #aaa; border-bottom: 0; box-shadow: -8px -4px 0 -7px #fff, 0 -4px 0 -3px #bbb; padding: 4px 2px 3px 8px; position: relative; }
.canvas-i::before { content: ""; position: absolute; left: 8px; right: 2px; top: 4px; bottom: 3px; border: 1px solid #aaa; }

/* CAD drawings */
.cad { background: #000; }
.w { fill: none; stroke: #fff; stroke-width: 1; }
.r { fill: none; stroke: #e21414; stroke-width: 2; }
.r1 { fill: none; stroke: #c41818; stroke-width: 1.500; }
.d { fill: none; stroke: #ffe; stroke-width: 1; stroke-dasharray: 1 6; }
.m { fill: none; stroke: #c82ec8; stroke-width: 2; }
.mt { fill: none; stroke: #e040e0; stroke-width: 1.500; }
.c { fill: none; stroke: #30e0e0; stroke-width: 1.500; }
.y { fill: none; stroke: #f2f24a; stroke-width: 1.500; }
.yt { fill: none; stroke: #f2f24a; stroke-width: 1.500; }
.y2 { fill: none; stroke: #f2e84a; stroke-width: 2; }
.g2 { fill: none; stroke: #22d422; stroke-width: 2; }
.dots { fill: none; stroke: #f5e85a; stroke-width: 2; stroke-dasharray: 1.500 10; }
.dk { stroke: #ffe; stroke-dasharray: 1 6; stroke-width: 1; }
.mg { stroke: #ffb0ff; stroke-dasharray: 1 5; stroke-width: 1; }
.tw { fill: #fff; font-family: "Noto Sans CJK SC", sans-serif; }
.tg { fill: #2ad42a; font-family: "Liberation Mono", monospace; }
.s7 { font-size: 7px; }
.s75 { font-size: 7.500px; }
.s8 { font-size: 8px; }
.s85 { font-size: 8.600px; }
.s9 { font-size: 9px; }
.s10 { font-size: 10px; }
.s12 { font-size: 12.500px; }
.s12m { font-size: 12.500px; }
.s14 { font-size: 13.600px; }
.s18 { font-size: 18px; font-family: "Liberation Serif", serif; }
.s19 { font-size: 18.500px; font-weight: 300; }
.s20 { font-size: 19.500px; }
.s22 { font-size: 22px; font-family: "Liberation Serif", serif; }
.s28 { font-size: 29px; font-family: "Liberation Serif", serif; }
.s31 { font-size: 31.500px; font-weight: 300; }
.s32 { font-size: 31px; font-family: "Liberation Serif", serif; }

/* buttons */
.btn { width: 89px; height: 25px; padding: 0; background: #e1e1e1; border: 1px solid #b4b4b4; font: 12px/16px "Noto Sans CJK SC", sans-serif; color: #222; }
.btn.on { border: 2px solid #1c78c8; }

/* window 3 */
.d3 { position: absolute; left: 778px; top: 326px; width: 566px; height: 375px; padding: 30px 7px 8px 7px; background: linear-gradient(#c4d0dc, #dbe5f3 40px); border: 1px solid #566270; }
.d3-in { display: flex; flex-direction: column; height: 100%; background: #f0f0f0; border-right: 1px solid #aab; border-bottom: 1px solid #999; }
.d3-h { height: 33px; padding-left: 325px; line-height: 34px; font-size: 12.500px; background: #f0f0f0; border-bottom: 1px solid #888; }
.d3-f { flex: 1; display: flex; justify-content: flex-end; align-items: flex-start; padding: 13px 26px 0 0; }
.b3 { width: 73px; height: 23px; }

/* window 2 */
.d2 { position: absolute; left: 192px; top: 113px; width: 981px; height: 533px; display: flex; flex-direction: column; padding: 0 1px; background: #f0f0f0; border: 1px solid #888; box-shadow: 0 6px 16px rgba(0,0,0,.35); }
.d2-t { height: 32px; flex: none; display: flex; align-items: center; margin: 0 -1px; padding-left: 8px; background: #fff; color: #888; }
.d2-t span { margin-left: 5px; margin-top: -3px; }
.faded { opacity: .6; margin-top: -4px; }
.d2-w { margin-left: auto; display: flex; gap: 33px; padding-right: 17px; margin-top: -4px; }
.d2-r { height: 29px; flex: none; display: flex; align-items: center; padding: 2px 0 0 682px; background: #eee; border-bottom: 1px solid #999; font-size: 12.500px; color: #111; }
.radio { display: block; width: 14px; height: 14px; border: 1px solid #444; border-radius: 50%; background: #fff; margin-right: 2px; }
.d2-f { flex: 1; display: flex; align-items: center; gap: 15px; padding-left: 336px; background: #f0f0f0; border-top: 2px solid #bbb; }
.b-pat { margin-right: 320px; height: 22px; margin-top: -1px; }

/* window 1 */
.d1 { position: absolute; left: 138px; top: 131px; width: 636px; height: 501px; display: flex; flex-direction: column; background: #f0f0f0; border: 1px solid #4a94dc; box-shadow: 0 8px 22px rgba(0,0,0,.4); }
.d1-t { height: 30px; flex: none; display: flex; align-items: center; padding: 0 0 2px 7px; background: #fff; }
.d1-t span { margin-left: 5px; font-size: 12.500px; }
.d1-w { margin-left: auto; display: flex; gap: 34px; padding-right: 17px; }
.d1-b { height: 422px; flex: none; display: flex; padding-left: 3px; background: #f0f0f0; }
.grid { width: 614px; display: grid; grid-template-columns: 302px 302px; grid-template-rows: 211px 205px; column-gap: 5px; row-gap: 5px; }
.cell { border-top: 2px solid #111; padding-top: 4px; background: #fdfdfd; }
.cell.sel { border-top-color: #d02424; }
.cell.low { border-top: 0; padding: 0; }
.scroll { width: 17px; margin-left: 1px; display: flex; flex-direction: column; background: #f0f0f0; height: 420px; }
.su { margin-bottom: 195px; }
.thumb { display: block; height: 197px; background: #cdcdcd; }
.d1-f { flex: 1; display: flex; gap: 15px; padding: 12px 0 0 407px; border-top: 1px solid #c4c4c4; }

/* IME */
.ime { position: absolute; left: 578px; top: 3px; width: 208px; height: 24px; display: flex; align-items: center; gap: 6px; }
.ime::before { content: ""; position: absolute; left: 22px; right: 0; top: 0; bottom: -1px; background: #fff; border: 1px solid #c8d0d8; }
.ime > * { position: relative; }
.ime-s { margin-left: 2px; margin-right: -2px; }
.ime-y { font: bold 14px/16px "Noto Sans CJK SC", sans-serif; color: #1f6fc4; margin-right: 3px; }
.ime-moon { margin-right: 2px; }
.ime-pt { margin-right: 3px; }

/* ball */
.ball { position: absolute; left: 934px; top: -26px; width: 46px; height: 46px; border-radius: 50%; background: #3db650; border: 2px solid #e8f2e8; box-shadow: 0 2px 4px rgba(0,0,0,.5); color: #fff; font: bold 11px/12px "Noto Sans", sans-serif; text-align: center; padding-top: 26px; }
```
